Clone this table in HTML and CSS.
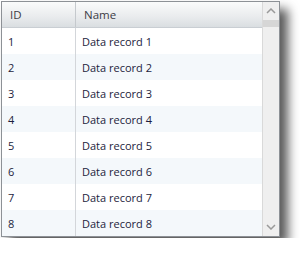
FILE: index.html
```html
<!DOCTYPE html>
<html lang="en">
<head>
  <meta charset="UTF-8" />
  <title>Data grid</title>
  <link rel="stylesheet" href="styles.css">
</head>
<body>
  <div class="grid">
    <div class="grid-body">
      <div class="row header">
        <div class="cell id">ID</div>
        <div class="cell name">Name</div>
      </div>
      <div class="row"><div class="cell id">1</div><div class="cell name">Data record 1</div></div>
      <div class="row alt"><div class="cell id">2</div><div class="cell name">Data record 2</div></div>
      <div class="row"><div class="cell id">3</div><div class="cell name">Data record 3</div></div>
      <div class="row alt"><div class="cell id">4</div><div class="cell name">Data record 4</div></div>
      <div class="row"><div class="cell id">5</div><div class="cell name">Data record 5</div></div>
      <div class="row alt"><div class="cell id">6</div><div class="cell name">Data record 6</div></div>
      <div class="row"><div class="cell id">7</div><div class="cell name">Data record 7</div></div>
      <div class="row alt"><div class="cell id">8</div><div class="cell name">Data record 8</div></div>
    </div>
    <div class="scrollbar">
      <div class="arrow">
        <svg width="10" height="6" viewBox="0 0 10 6"><path d="M1 5 L5 1 L9 5" fill="none" stroke="#9a9a9a" stroke-width="1.5"/></svg>
      </div>
      <div class="thumb"></div>
      <div class="track"></div>
      <div class="arrow">
        <svg width="10" height="6" viewBox="0 0 10 6"><path d="M1 1 L5 5 L9 1" fill="none" stroke="#9a9a9a" stroke-width="1.5"/></svg>
      </div>
    </div>
  </div>
</body>
</html>
```

FILE: styles.css
```css
* {
  margin: 0;
  padding: 0;
  box-sizing: border-box;
}
body {
  background: #fff;
  padding: 1px;
  font-family: 'Open Sans', 'Noto Sans', sans-serif;
  font-size: 11px;
}
.grid {
  display: flex;
  width: 279px;
  height: 236px;
  border: 1px solid #8d9196;
  background: #fff;
  box-shadow: 8px 8px 10px rgba(0, 0, 0, 0.65);
}
.grid-body {
  flex: 1;
  display: flex;
  flex-direction: column;
}
.row {
  display: flex;
  height: 26px;
  color: #1d1d3c;
}
.row.alt {
  background: #f4f8fb;
}
.row.header {
  height: 26px;
  color: #3c3c46;
  font-size: 11.5px;
  background: linear-gradient(#fafbfb, #e9ebed 60%, #dadee1);
  border-bottom: 1px solid #c9ced3;
}
.cell {
  display: flex;
  align-items: center;
  padding-left: 6px;
}
.cell.id {
  width: 74px;
  border-right: 1px solid #d3d6da;
}
.header .cell.id {
  padding-left: 8px;
  border-right-color: #c5c9cd;
}
.header .cell.name {
  padding-left: 8px;
}
.cell.name {
  flex: 1;
}
.scrollbar {
  width: 17px;
  display: flex;
  flex-direction: column;
  background: #efefef;
  border-left: 1px solid #d9d9d9;
}
.arrow {
  height: 18px;
  display: flex;
  align-items: center;
  justify-content: center;
}
.thumb {
  height: 7px;
  background: #d6d6d6;
}
.track {
  flex: 1;
}
```
